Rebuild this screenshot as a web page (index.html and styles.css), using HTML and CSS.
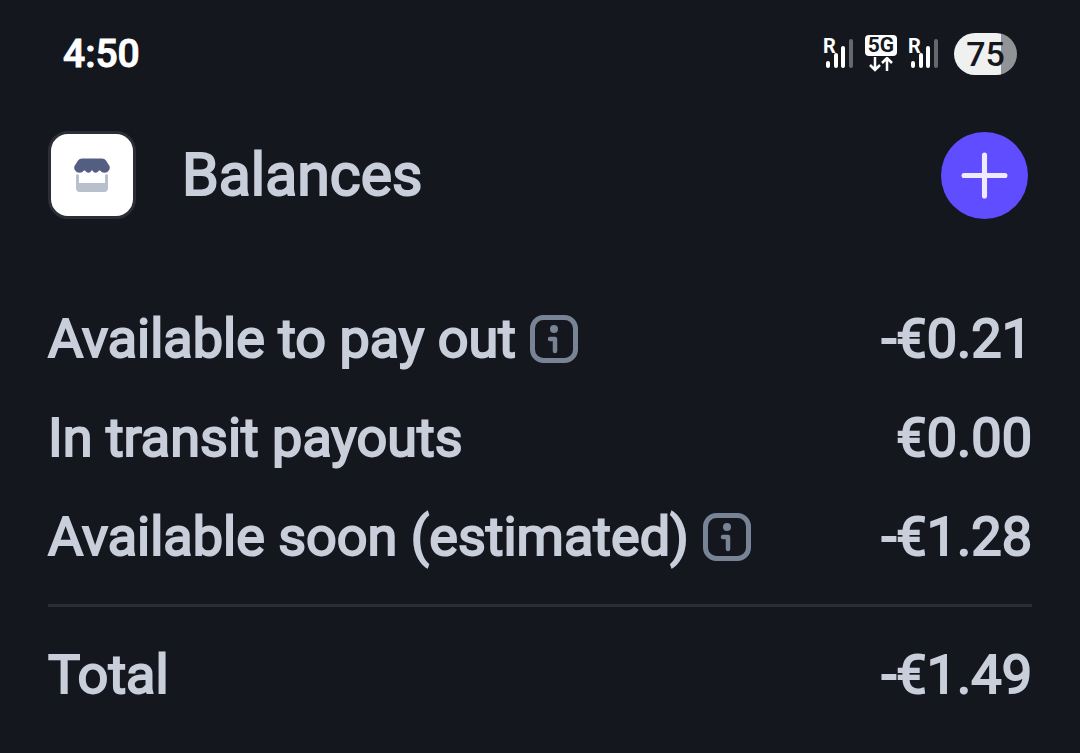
FILE: index.html
```html
<!DOCTYPE html>
<html lang="en">
  <head>
    <meta charset="UTF-8" />
    <meta name="viewport" content="width=device-width, initial-scale=1.0" />
    <title>Balances</title>
    <link rel="stylesheet" href="styles.css">
  </head>
  <body>
    <div class="status-bar">
      <time class="clock">4:50</time>
      <div class="status-icons">
        <div class="signal">
          <span class="roaming">R</span>
          <svg width="31" height="34" viewBox="0 0 31 34" aria-hidden="true">
            <g stroke="#fff" stroke-width="4" stroke-linecap="round">
              <path d="M5 26v3M13 18v11M20 11v18" />
              <path d="M28 4v25" stroke="#66686d" />
            </g>
          </svg>
        </div>
        <div class="network">
          <span class="network-label">5G</span>
          <svg width="24" height="15" viewBox="0 0 24 15" aria-hidden="true">
            <path d="M6 0v13M1 8l5 5 5-5M18 14V1M13 6l5-5 5 5" fill="none" stroke="#fff" stroke-width="2.5" />
          </svg>
        </div>
        <div class="signal">
          <span class="roaming">R</span>
          <svg width="31" height="34" viewBox="0 0 31 34" aria-hidden="true">
            <g stroke="#fff" stroke-width="4" stroke-linecap="round">
              <path d="M5 26v3M13 18v11M20 11v18" />
              <path d="M28 4v25" stroke="#66686d" />
            </g>
          </svg>
        </div>
        <div class="battery">75</div>
      </div>
    </div>

    <header class="header">
      <button type="button" class="account" aria-label="Switch account">
        <svg width="36" height="36" viewBox="0 0 36 36" aria-hidden="true">
          <path d="M2 17.500h3V26h26v-8.500h3V31q0 4-4 4H6q-4 0-4-4z" fill="#b8bfcd" />
          <path d="M8 1.500h20q2.500 0 4 2l3.300 5.200q1.200 2.500-.3 4.500-1.500 2.600-4.500 2.600-3 0-4.500-2.300h-1q-1.500 2.300-3.500 2.300t-3-2.300h-1q-1 2.300-3 2.300t-3.500-2.300h-1q-1.500 2.300-4.500 2.300-3 0-4.500-2.600-1.500-2-.3-4.500L4 3.500q1.500-2 4-2z" fill="#545e83" />
        </svg>
      </button>
      <h1>Balances</h1>
      <button type="button" class="add" aria-label="Add">
        <svg width="47" height="47" viewBox="0 0 46 46" aria-hidden="true">
          <path d="M23 3v40M3 23h40" stroke="#eeebff" stroke-width="5" stroke-linecap="round" />
        </svg>
      </button>
    </header>

    <main>
      <dl class="balances">
        <div class="row">
          <dt>
            Available to pay out
            <button type="button" class="info" aria-label="About available to pay out">
              <svg width="48" height="48" viewBox="0 0 48 48" aria-hidden="true">
                <rect x="2.5" y="2.5" width="43" height="43" rx="11" fill="none" stroke="#788396" stroke-width="5" />
                <circle cx="24" cy="14" r="4" fill="#788396" />
                <path d="M20 24h5v12" fill="none" stroke="#788396" stroke-width="4.5" stroke-linecap="round" stroke-linejoin="round" />
              </svg>
            </button>
          </dt>
          <dd>-€0.21</dd>
        </div>
        <div class="row">
          <dt>In transit payouts</dt>
          <dd>€0.00</dd>
        </div>
        <div class="row">
          <dt>
            Available soon (estimated)
            <button type="button" class="info" aria-label="About available soon">
              <svg width="48" height="48" viewBox="0 0 48 48" aria-hidden="true">
                <rect x="2.5" y="2.5" width="43" height="43" rx="11" fill="none" stroke="#788396" stroke-width="5" />
                <circle cx="24" cy="14" r="4" fill="#788396" />
                <path d="M20 24h5v12" fill="none" stroke="#788396" stroke-width="4.5" stroke-linecap="round" stroke-linejoin="round" />
              </svg>
            </button>
          </dt>
          <dd>-€1.28</dd>
        </div>
        <div class="row total">
          <dt>Total</dt>
          <dd>-€1.49</dd>
        </div>
      </dl>
    </main>
  </body>
</html>
```
FILE: styles.css
```css
* {
  box-sizing: border-box;
}
body {
  margin: 0;
  padding: 32px 48px;
  background-color: #14171e;
  color: #c9cedb;
  font-family: Roboto, sans-serif;
}
button {
  padding: 0;
  border: 0;
  background: none;
  cursor: pointer;
}
svg {
  display: block;
}

/* Status bar */
.status-bar {
  display: flex;
  align-items: center;
  justify-content: space-between;
  height: 44px;
  padding: 0 15px;
  color: #fff;
  font-weight: 500;
}
.clock {
  font-size: 39px;
  line-height: 44px;
  -webkit-text-stroke: 1px;
}
.status-icons {
  display: flex;
  align-items: center;
  gap: 11px;
}
.signal {
  position: relative;
}
.roaming {
  position: absolute;
  top: 0;
  left: 0;
  font-size: 20px;
  font-weight: 700;
  line-height: 18px;
}
.network {
  display: flex;
  flex-direction: column;
  align-items: center;
  gap: 1px;
  margin-bottom: 2px;
}
.network-label {
  width: 32px;
  border-radius: 4px;
  background-color: #fff;
  color: #14171e;
  font-size: 21px;
  font-weight: 700;
  line-height: 21px;
  text-align: center;
}
.battery {
  width: 63px;
  border-radius: 21px;
  margin-left: 4px;
  background: linear-gradient(to right, #eff0f0 75%, #929396 75%);
  color: #14171e;
  font-size: 34px;
  line-height: 42px;
  text-align: center;
}

/* Header */
.header {
  display: flex;
  align-items: center;
  margin-top: 55px;
  padding-right: 4px;
}
.account {
  display: flex;
  align-items: center;
  justify-content: center;
  width: 88px;
  height: 88px;
  border: 3px solid #2b2e36;
  border-radius: 20px;
  background-color: #fff;
}
h1 {
  flex: 1;
  margin: 0 0 0 46px;
  font-size: 59px;
  font-weight: 400;
  line-height: 72px;
  -webkit-text-stroke: 2px;
}
.add {
  display: flex;
  align-items: center;
  justify-content: center;
  width: 87px;
  height: 87px;
  border-radius: 50%;
  background-color: #5f4dff;
}

/* Balances */
.balances {
  display: flex;
  flex-direction: column;
  gap: 32px;
  margin: 86px 0 0;
  font-size: 54px;
  line-height: 67px;
  -webkit-text-stroke: 2px;
}
.row {
  display: flex;
  justify-content: space-between;
}
dt {
  display: flex;
  align-items: center;
  gap: 14px;
}
dd {
  margin: 0;
}
.total {
  margin-top: 2px;
  padding-top: 34px;
  border-top: 3px solid #2b2e36;
}
```
